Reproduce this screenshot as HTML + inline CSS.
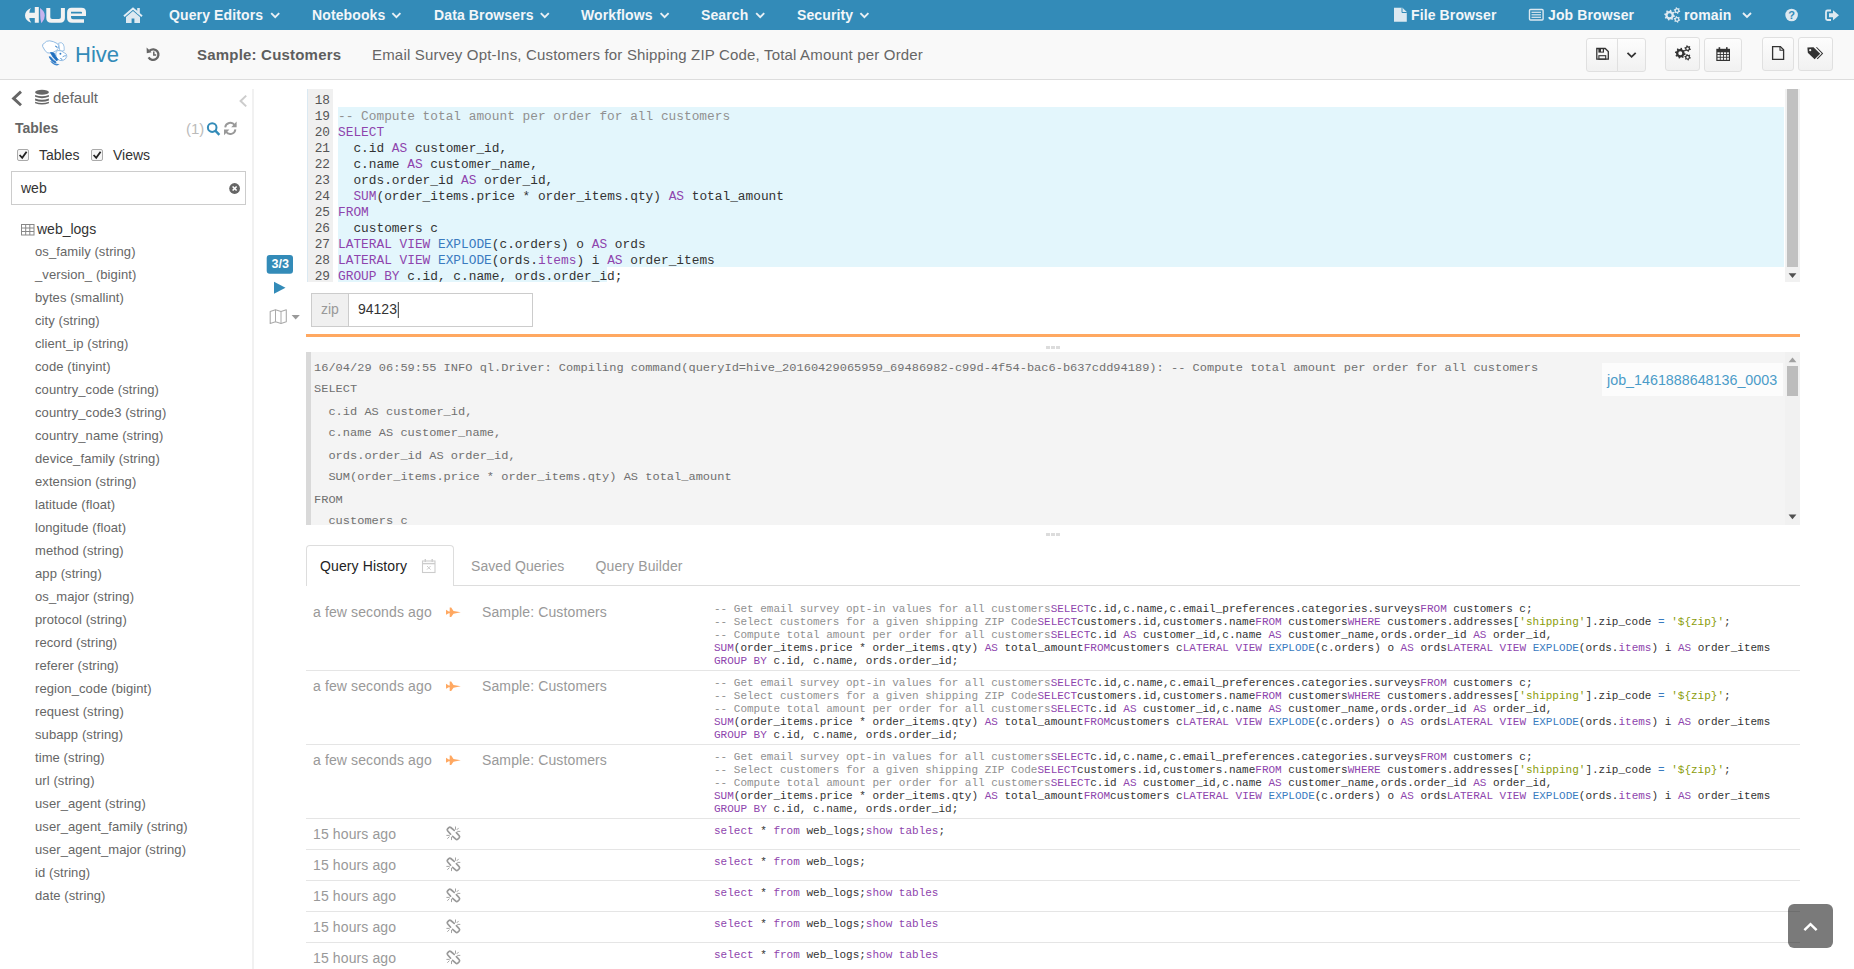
<!DOCTYPE html>
<html><head><meta charset="utf-8">
<style>
html,body{margin:0;padding:0}
body{width:1854px;height:969px;overflow:hidden;position:relative;background:#fff;font-family:"Liberation Sans",sans-serif;color:#333}
.a{position:absolute}
.t{position:absolute;white-space:pre;line-height:1}
svg{position:absolute;overflow:visible}
#nav{left:0;top:0;width:1854px;height:30px;background:#338bb8}
.nl{font-size:14px;font-weight:bold;color:#f2f6f9;top:8px;letter-spacing:0.12px}
#bar{left:0;top:30px;width:1854px;height:49px;background:#f9f9f9;border-bottom:1px solid #dddddd}
.btn{position:absolute;box-sizing:border-box;border:1px solid #e0e0e0;border-radius:3px;background:linear-gradient(#fdfdfd,#f1f1f1)}
.col{font-size:13px;color:#666;left:35px;letter-spacing:0.09px}
.code{font-family:"Liberation Mono",monospace;font-size:12.82px;line-height:16px;white-space:pre;position:absolute;color:#333}
.kw{color:#8e44ad}
.fn{color:#3a7bbf}
.cm{color:#909090}
.st{color:#8a9c0a}
.ln{font-family:"Liberation Mono",monospace;font-size:12.78px;line-height:16px;position:absolute;color:#555;text-align:right;width:22px}
.log{font-family:"Liberation Mono",monospace;font-size:12px;white-space:pre;position:absolute;color:#707070;line-height:22px}
.hc{font-family:"Liberation Mono",monospace;font-size:11.01px;white-space:pre;position:absolute;color:#333;line-height:13px;left:714px}
.ht{font-size:14px;color:#999;letter-spacing:0.12px;position:absolute;white-space:pre;line-height:1}
.hr{position:absolute;left:306px;width:1494px;height:1px;background:#e5e5e5}
</style></head>
<body>
<!-- NAVBAR -->
<div id="nav" class="a">
<svg width="1854" height="30" style="left:0;top:0">
 <!-- logo -->
 <path d="M31,8 Q25,11 25,15.4 Q25,20 31.3,22.8 Q29.3,20.5 29.3,18 L34.8,18 L34.8,22.8 L38.8,22.8 L38.8,7 L34.8,7 L34.8,12.7 L29.3,12.7 Q29.3,10 31,8 Z" fill="#f2f2f2"/>
 <path d="M40,8 Q44.8,11.5 44.8,15.4 Q44.8,19.5 41.8,22.8 L41.2,22.8 Q40.2,19 40.2,15.4 Q40.2,11 40,8 Z" fill="#c8b4ee"/>
 <path d="M46.3,7.9 L50.3,7.9 L50.3,17.2 Q50.3,19 52.2,19 L58.9,19 Q60.9,19 60.9,17.2 L60.9,7.9 L64.9,7.9 L64.9,18 Q64.9,22.8 60,22.8 L51.2,22.8 Q46.3,22.8 46.3,18 Z" fill="#f2f2f2"/>
 <path d="M71.5,7.7 L81.5,7.7 Q86,7.7 86,12 L86,16 L71,16 L71,17.2 Q71,19.2 73,19.2 L84,19.2 L84,22.8 L72,22.8 Q67.1,22.8 67.1,18 L67.1,12.4 Q67.1,7.7 71.5,7.7 Z M71,11.7 L71,13.6 L82,13.6 L82,12.6 Q82,11.7 81,11.7 Z" fill="#f2f2f2" fill-rule="evenodd"/>
 <!-- home -->
 <polyline points="124,16.2 133,8.6 142,16.2" fill="none" stroke="#e2edf4" stroke-width="2"/>
 <path d="M126,17 L133,11 L140,17 L140,23 L134.4,23 L134.4,18.6 L131.6,18.6 L131.6,23 L126,23 Z" fill="#dde9f1"/>
 <rect x="137.2" y="8" width="2.6" height="5.6" fill="#dde9f1"/>
 <!-- chevrons -->
 <g fill="none" stroke="#e8f0f5" stroke-width="1.9">
  <polyline points="271.2,13.2 275.2,17.2 279.2,13.2"/>
  <polyline points="392.4,13.2 396.4,17.2 400.4,13.2"/>
  <polyline points="540.8,13.2 544.8,17.2 548.8,13.2"/>
  <polyline points="660.6,13.2 664.6,17.2 668.6,13.2"/>
  <polyline points="756.2,13.2 760.2,17.2 764.2,13.2"/>
  <polyline points="860.4,13.2 864.4,17.2 868.4,13.2"/>
  <polyline points="1743,13 1747,17 1751,13"/>
 </g>
 <!-- file icon -->
 <path d="M1394,7.7 L1402.5,7.7 L1406.8,12 L1406.8,21.7 L1394,21.7 Z" fill="#dde9f1"/>
 <path d="M1402,7.7 L1402,12.5 L1406.8,12.5" fill="none" stroke="#338bb8" stroke-width="1"/>
 <!-- list-alt -->
 <rect x="1529.5" y="9.5" width="13.6" height="10.5" rx="1" fill="none" stroke="#dde9f1" stroke-width="1.4"/>
 <g stroke="#dde9f1" stroke-width="1.2"><line x1="1531.5" y1="12.3" x2="1541" y2="12.3"/><line x1="1531.5" y1="14.8" x2="1541" y2="14.8"/><line x1="1531.5" y1="17.3" x2="1541" y2="17.3"/></g>
 <!-- cogs -->
 <path fill-rule="evenodd" fill="#dde9f1" d="M1673.90,15.20 L1674.98,15.62 L1674.71,16.95 L1673.55,16.91 L1672.64,18.24 L1673.11,19.31 L1671.98,20.05 L1671.18,19.20 L1669.60,19.50 L1669.18,20.58 L1667.85,20.31 L1667.89,19.15 L1666.56,18.24 L1665.49,18.71 L1664.75,17.58 L1665.60,16.78 L1665.30,15.20 L1664.22,14.78 L1664.49,13.45 L1665.65,13.49 L1666.56,12.16 L1666.09,11.09 L1667.22,10.35 L1668.02,11.20 L1669.60,10.90 L1670.02,9.82 L1671.35,10.09 L1671.31,11.25 L1672.64,12.16 L1673.71,11.69 L1674.45,12.82 L1673.60,13.62 Z M1671.60,15.20 A2.0,2.0 0 1 0 1667.60,15.20 A2.0,2.0 0 1 0 1671.60,15.20 Z"/>
 <path fill-rule="evenodd" fill="#dde9f1" d="M1679.50,10.60 L1680.28,10.94 L1679.99,12.01 L1679.14,11.90 L1678.25,12.77 L1678.34,13.61 L1677.28,13.89 L1676.95,13.10 L1675.75,12.77 L1675.06,13.27 L1674.29,12.48 L1674.81,11.80 L1674.50,10.60 L1673.72,10.26 L1674.01,9.19 L1674.86,9.30 L1675.75,8.43 L1675.66,7.59 L1676.72,7.31 L1677.05,8.10 L1678.25,8.43 L1678.94,7.93 L1679.71,8.72 L1679.19,9.40 Z M1678.20,10.60 A1.2,1.2 0 1 0 1675.80,10.60 A1.2,1.2 0 1 0 1678.20,10.60 Z"/>
 <path fill-rule="evenodd" fill="#dde9f1" d="M1679.50,19.40 L1680.28,19.74 L1679.99,20.81 L1679.14,20.70 L1678.25,21.57 L1678.34,22.41 L1677.28,22.69 L1676.95,21.90 L1675.75,21.57 L1675.06,22.07 L1674.29,21.28 L1674.81,20.60 L1674.50,19.40 L1673.72,19.06 L1674.01,17.99 L1674.86,18.10 L1675.75,17.23 L1675.66,16.39 L1676.72,16.11 L1677.05,16.90 L1678.25,17.23 L1678.94,16.73 L1679.71,17.52 L1679.19,18.20 Z M1678.20,19.40 A1.2,1.2 0 1 0 1675.80,19.40 A1.2,1.2 0 1 0 1678.20,19.40 Z"/>
 <!-- question -->
 <circle cx="1791.6" cy="15" r="6.3" fill="#dde9f1"/>
 <text x="1791.6" y="19.3" font-family="Liberation Sans" font-weight="bold" font-size="11" fill="#338bb8" text-anchor="middle">?</text>
 <!-- sign out -->
 <path d="M1831,10.5 L1827.5,10.5 Q1826,10.5 1826,12 L1826,18.5 Q1826,20 1827.5,20 L1831,20" fill="none" stroke="#dde9f1" stroke-width="1.8"/>
 <path d="M1829,13.2 L1833,13.2 L1833,10.2 L1839,15.2 L1833,20.2 L1833,17.2 L1829,17.2 Z" fill="#dde9f1"/>
</svg>
<span class="t nl" style="left:169px">Query Editors</span>
<span class="t nl" style="left:312px">Notebooks</span>
<span class="t nl" style="left:434px">Data Browsers</span>
<span class="t nl" style="left:581px">Workflows</span>
<span class="t nl" style="left:701px">Search</span>
<span class="t nl" style="left:797px">Security</span>
<span class="t nl" style="left:1411px">File Browser</span>
<span class="t nl" style="left:1548px">Job Browser</span>
<span class="t nl" style="left:1684px">romain</span>
</div>

<!-- SECOND BAR -->
<div id="bar" class="a">
<svg width="1854" height="50" style="left:0;top:0" viewBox="0 30 1854 50">
 <!-- hive logo -->
 <path d="M58.6,43.2 Q61.5,41.6 63.2,44 Q64.6,46.5 64.2,50.5 L60,51.5 Z" fill="#fff" stroke="#8ab8e2" stroke-width="0.8"/>
 <path d="M42.6,46.4 Q42,44 44.4,43.2 Q46,40.6 49.5,40.8 Q53,41 57.4,43.6 Q59.4,45.4 58.4,48.2 Q57,51 53,52.4 Q49.6,53.4 47.2,52.8 Q44.4,50.4 42.6,46.4 Z" fill="#fff" stroke="#7fb0de" stroke-width="0.85"/>
 <path d="M57.5,50.5 Q61.5,50 64.6,53 Q67.2,54 66.8,56.4 Q66,59.6 62.6,60.6 Q59.6,61 57.4,59.2 Q55.4,56.5 55.8,53 Z" fill="#fff" stroke="#7fb0de" stroke-width="0.85"/>
 <path d="M50.4,52.6 Q52.6,52.4 54.2,53.2 Q55.6,56.8 58,59.6 L56.6,61 Q52.6,57.6 50.4,52.6 Z" fill="#1e6fc0" stroke="#1e6fc0" stroke-width="0.7"/>
 <path d="M49,56.8 Q50.4,56.6 51.2,57.4 Q53,60.4 56.2,62 L55.4,63.2 Q51.2,61.4 49,56.8 Z" fill="#2774c4" stroke="#2774c4" stroke-width="0.7"/>
 <path d="M50.2,61 Q51.4,61 52,61.6 Q54,63.8 57.4,64.4 L56.8,65.4 Q52.6,64.8 50.2,61 Z" fill="#3f86cc"/>
 <path d="M56,63.6 L59.6,64.6 L57,65.6 Z" fill="#3f86cc"/>
 <circle cx="60.4" cy="53.8" r="0.95" fill="#2f7bc8"/>
 <path d="M62.6,56.8 Q64.4,55.6 66,55.8" stroke="#5a9ad6" stroke-width="0.9" fill="none"/>
 <path d="M55.2,46 Q56.4,46.4 57.4,47.6" stroke="#3c86cc" stroke-width="1.1" fill="none"/>
 <path d="M60.4,58.4 L62.4,59.6" stroke="#3c86cc" stroke-width="1" fill="none"/>
 <!-- history icon -->
 <path d="M149.6,50.6 A5.3,5.3 0 1 1 148.6,57.4" fill="none" stroke="#666" stroke-width="2.3"/>
 <path d="M146.6,47.6 L151.6,52.2 L146.8,53.2 Z" fill="#666"/>
 <polyline points="153.8,51.6 153.8,54.9 156.2,54.9" fill="none" stroke="#666" stroke-width="1.5"/>
</svg>
<span class="t" style="left:75px;top:13.5px;font-size:22px;color:#338bb8">Hive</span>
<span class="t" style="left:197px;top:17px;font-size:15px;font-weight:bold;color:#5e5e5e;letter-spacing:0.2px">Sample: Customers</span>
<span class="t" style="left:372px;top:17px;font-size:15px;color:#666;letter-spacing:0.18px">Email Survey Opt-Ins, Customers for Shipping ZIP Code, Total Amount per Order</span>
<div class="btn" style="left:1586px;top:8px;width:32px;height:34px;border-radius:3px 0 0 3px"></div>
<div class="btn" style="left:1617px;top:8px;width:29px;height:34px;border-radius:0 3px 3px 0"></div>
<div class="btn" style="left:1665px;top:7px;width:35px;height:34px"></div>
<div class="btn" style="left:1704px;top:8px;width:38px;height:34px"></div>
<div class="btn" style="left:1762px;top:7px;width:32px;height:34px"></div>
<div class="btn" style="left:1798px;top:7px;width:35px;height:34px"></div>
<svg width="1854" height="50" style="left:0;top:0" viewBox="0 30 1854 50">
 <!-- save -->
 <path d="M1596.8,48.5 L1605.2,48.5 L1608.3,51.6 L1608.3,59.2 L1596.8,59.2 Z" fill="none" stroke="#333" stroke-width="1.3"/>
 <rect x="1598.4" y="48.2" width="5.6" height="4.4" fill="#333"/>
 <rect x="1601" y="49.2" width="1.8" height="2.4" fill="#f8f8f8"/>
 <rect x="1598.9" y="55.7" width="6.8" height="3.5" fill="none" stroke="#333" stroke-width="1.1"/>
 <polyline points="1627.5,52.8 1631.6,56.8 1635.7,52.8" fill="none" stroke="#333" stroke-width="1.8"/>
 <!-- gears -->
 <path fill-rule="evenodd" fill="#333" d="M1684.60,53.20 L1685.68,53.62 L1685.41,54.95 L1684.25,54.91 L1683.34,56.24 L1683.81,57.31 L1682.68,58.05 L1681.88,57.20 L1680.30,57.50 L1679.88,58.58 L1678.55,58.31 L1678.59,57.15 L1677.26,56.24 L1676.19,56.71 L1675.45,55.58 L1676.30,54.78 L1676.00,53.20 L1674.92,52.78 L1675.19,51.45 L1676.35,51.49 L1677.26,50.16 L1676.79,49.09 L1677.92,48.35 L1678.72,49.20 L1680.30,48.90 L1680.72,47.82 L1682.05,48.09 L1682.01,49.25 L1683.34,50.16 L1684.41,49.69 L1685.15,50.82 L1684.30,51.62 Z M1682.30,53.20 A2.0,2.0 0 1 0 1678.30,53.20 A2.0,2.0 0 1 0 1682.30,53.20 Z"/>
 <path fill-rule="evenodd" fill="#333" d="M1690.10,48.60 L1690.88,48.94 L1690.59,50.01 L1689.74,49.90 L1688.85,50.77 L1688.94,51.61 L1687.88,51.89 L1687.55,51.10 L1686.35,50.77 L1685.66,51.27 L1684.89,50.48 L1685.41,49.80 L1685.10,48.60 L1684.32,48.26 L1684.61,47.19 L1685.46,47.30 L1686.35,46.43 L1686.26,45.59 L1687.32,45.31 L1687.65,46.10 L1688.85,46.43 L1689.54,45.93 L1690.31,46.72 L1689.79,47.40 Z M1688.80,48.60 A1.2,1.2 0 1 0 1686.40,48.60 A1.2,1.2 0 1 0 1688.80,48.60 Z"/>
 <path fill-rule="evenodd" fill="#333" d="M1690.10,57.20 L1690.88,57.54 L1690.59,58.61 L1689.74,58.50 L1688.85,59.37 L1688.94,60.21 L1687.88,60.49 L1687.55,59.70 L1686.35,59.37 L1685.66,59.87 L1684.89,59.08 L1685.41,58.40 L1685.10,57.20 L1684.32,56.86 L1684.61,55.79 L1685.46,55.90 L1686.35,55.03 L1686.26,54.19 L1687.32,53.91 L1687.65,54.70 L1688.85,55.03 L1689.54,54.53 L1690.31,55.32 L1689.79,56.00 Z M1688.80,57.20 A1.2,1.2 0 1 0 1686.40,57.20 A1.2,1.2 0 1 0 1688.80,57.20 Z"/>
 <!-- calendar -->
 <rect x="1716.3" y="48.8" width="13.7" height="12.2" fill="#333"/>
 <g fill="#f6f6f6">
  <rect x="1717.5" y="52.3" width="2.3" height="1.8"/><rect x="1720.7" y="52.3" width="2.3" height="1.8"/><rect x="1723.9" y="52.3" width="2.3" height="1.8"/><rect x="1727.1" y="52.3" width="1.8" height="1.8"/>
  <rect x="1717.5" y="55" width="2.3" height="1.8"/><rect x="1720.7" y="55" width="2.3" height="1.8"/><rect x="1723.9" y="55" width="2.3" height="1.8"/><rect x="1727.1" y="55" width="1.8" height="1.8"/>
  <rect x="1717.5" y="57.7" width="2.3" height="2.1"/><rect x="1720.7" y="57.7" width="2.3" height="2.1"/><rect x="1723.9" y="57.7" width="2.3" height="2.1"/><rect x="1727.1" y="57.7" width="1.8" height="2.1"/>
 </g>
 <rect x="1718.6" y="47.2" width="1.6" height="3.4" fill="#333"/>
 <rect x="1726" y="47.2" width="1.6" height="3.4" fill="#333"/>
 <!-- file-o -->
 <path d="M1772.6,46.6 L1780.4,46.6 L1783.6,49.8 L1783.6,59.3 L1772.6,59.3 Z" fill="none" stroke="#333" stroke-width="1.3"/>
 <path d="M1780,46.6 L1780,50.3 L1783.6,50.3" fill="none" stroke="#333" stroke-width="1.1"/>
 <!-- tags -->
 <path d="M1807.4,47.5 L1813.5,47.2 L1820.2,53.8 L1814.6,59.2 L1807.8,52.8 Z" fill="#333"/>
 <path d="M1815.8,47.2 L1817,47.2 L1823.2,53.6 L1817.6,59.2 L1816.8,58.6 L1821.8,53.6 Z" fill="#333"/>
 <circle cx="1810.2" cy="50.2" r="1.1" fill="#f6f6f6"/>
</svg>
</div>

<!-- SIDEBAR -->
<svg width="260" height="250" style="left:0;top:0">
 <polyline points="21,91.6 13.6,98.4 21,105.2" fill="none" stroke="#666" stroke-width="2.9"/>
 <!-- database -->
 <g fill="#666">
  <ellipse cx="42" cy="92.2" rx="6.9" ry="2.5"/>
  <path d="M35.1,95 Q42,97.6 48.9,95 L48.9,96.8 Q42,99.6 35.1,96.8 Z"/>
  <path d="M35.1,98.4 Q42,101 48.9,98.4 L48.9,100.4 Q42,103.2 35.1,100.4 Z"/>
  <path d="M35.1,101.8 Q42,104.4 48.9,101.8 L48.9,103.2 Q42,105.8 35.1,103.2 Z"/>
 </g>
 <polyline points="246.2,95.6 240.6,101 246.2,106.4" fill="none" stroke="#ccc" stroke-width="2"/>
 <!-- search -->
 <circle cx="212.2" cy="127.6" r="4.3" fill="none" stroke="#338bb8" stroke-width="2"/>
 <line x1="215.3" y1="130.7" x2="219.4" y2="134.8" stroke="#338bb8" stroke-width="2.4"/>
 <!-- refresh -->
 <path d="M225.2,127.4 A5.2,5.2 0 0 1 234.6,125" fill="none" stroke="#999" stroke-width="1.9"/>
 <path d="M235.4,129.4 A5.2,5.2 0 0 1 226,131.8" fill="none" stroke="#999" stroke-width="1.9"/>
 <path d="M236.6,121.6 L236.6,127.2 L231.2,127.2 Z" fill="#999"/>
 <path d="M224,135.2 L224,129.6 L229.4,129.6 Z" fill="#999"/>
 <!-- checkboxes -->
 <rect x="17.5" y="149.5" width="11" height="11" rx="1.5" fill="#f5f5f5" stroke="#aaa" stroke-width="1"/>
 <polyline points="19.6,155 22.2,157.8 26.6,151.8" fill="none" stroke="#222" stroke-width="1.8"/>
 <rect x="91.5" y="149.5" width="11" height="11" rx="1.5" fill="#f5f5f5" stroke="#aaa" stroke-width="1"/>
 <polyline points="93.6,155 96.2,157.8 100.6,151.8" fill="none" stroke="#222" stroke-width="1.8"/>
 <!-- input -->
 <rect x="11.5" y="171.5" width="234" height="33" fill="#fff" stroke="#ccc" stroke-width="1"/>
 <circle cx="234.6" cy="188.5" r="5.4" fill="#666"/>
 <g stroke="#fff" stroke-width="1.6"><line x1="232.6" y1="186.5" x2="236.6" y2="190.5"/><line x1="236.6" y1="186.5" x2="232.6" y2="190.5"/></g>
 <!-- table icon -->
 <rect x="21.5" y="224.5" width="12.5" height="10.5" fill="none" stroke="#888" stroke-width="1"/>
 <g stroke="#888" stroke-width="1"><line x1="21.5" y1="228" x2="34" y2="228"/><line x1="21.5" y1="231.5" x2="34" y2="231.5"/><line x1="25.7" y1="224.5" x2="25.7" y2="235"/><line x1="29.8" y1="224.5" x2="29.8" y2="235"/></g>
</svg>
<span class="t" style="left:53px;top:90px;font-size:15px;color:#666">default</span>
<span class="t" style="left:15px;top:121px;font-size:14px;font-weight:bold;color:#666">Tables</span>
<span class="t" style="left:186px;top:121px;font-size:15px;color:#bbb">(1)</span>
<span class="t" style="left:39px;top:148px;font-size:14px;color:#333">Tables</span>
<span class="t" style="left:113px;top:148px;font-size:14px;color:#333">Views</span>
<span class="t" style="left:21px;top:181px;font-size:14px;color:#333">web</span>
<span class="t" style="left:37px;top:221.5px;font-size:14px;color:#333">web_logs</span>
<span class="t col" style="top:244.8px">os_family (string)</span>
<span class="t col" style="top:267.8px">_version_ (bigint)</span>
<span class="t col" style="top:290.8px">bytes (smallint)</span>
<span class="t col" style="top:313.8px">city (string)</span>
<span class="t col" style="top:336.8px">client_ip (string)</span>
<span class="t col" style="top:359.8px">code (tinyint)</span>
<span class="t col" style="top:382.8px">country_code (string)</span>
<span class="t col" style="top:405.8px">country_code3 (string)</span>
<span class="t col" style="top:428.8px">country_name (string)</span>
<span class="t col" style="top:451.8px">device_family (string)</span>
<span class="t col" style="top:474.8px">extension (string)</span>
<span class="t col" style="top:497.8px">latitude (float)</span>
<span class="t col" style="top:520.8px">longitude (float)</span>
<span class="t col" style="top:543.8px">method (string)</span>
<span class="t col" style="top:566.8px">app (string)</span>
<span class="t col" style="top:589.8px">os_major (string)</span>
<span class="t col" style="top:612.8px">protocol (string)</span>
<span class="t col" style="top:635.8px">record (string)</span>
<span class="t col" style="top:658.8px">referer (string)</span>
<span class="t col" style="top:681.8px">region_code (bigint)</span>
<span class="t col" style="top:704.8px">request (string)</span>
<span class="t col" style="top:727.8px">subapp (string)</span>
<span class="t col" style="top:750.8px">time (string)</span>
<span class="t col" style="top:773.8px">url (string)</span>
<span class="t col" style="top:796.8px">user_agent (string)</span>
<span class="t col" style="top:819.8px">user_agent_family (string)</span>
<span class="t col" style="top:842.8px">user_agent_major (string)</span>
<span class="t col" style="top:865.8px">id (string)</span>
<span class="t col" style="top:888.8px">date (string)</span>
<div class="a" style="left:252px;top:89px;width:2px;height:880px;background:#f1f1f1"></div>

<!-- EDITOR -->
<div class="a" style="left:307px;top:89px;width:1px;height:193px;background:#dbe9f2"></div>
<div class="a" style="left:308px;top:89px;width:25px;height:193px;background:#f0f0f0"></div>
<div class="a" style="left:338px;top:107px;width:1446px;height:160px;background:#e3f6fc"></div>
<div class="a" style="left:338px;top:267px;width:269px;height:15px;background:#e3f6fc"></div>
<div class="ln" style="left:308px;top:93px">18
19
20
21
22
23
24
25
26
27
28
29</div>
<div class="code" style="left:338px;top:93px">
<span class="cm">-- Compute total amount per order for all customers</span>
<span class="kw">SELECT</span>
  c.id <span class="kw">AS</span> customer_id,
  c.name <span class="kw">AS</span> customer_name,
  ords.order_id <span class="kw">AS</span> order_id,
  <span class="kw">SUM</span>(order_items.price * order_items.qty) <span class="kw">AS</span> total_amount
<span class="kw">FROM</span>
  customers c
<span class="kw">LATERAL VIEW</span> <span class="fn">EXPLODE</span>(c.orders) o <span class="kw">AS</span> ords
<span class="kw">LATERAL VIEW</span> <span class="fn">EXPLODE</span>(ords.<span class="kw">items</span>) i <span class="kw">AS</span> order_items
<span class="kw">GROUP BY</span> c.id, c.name, ords.order_id;</div>
<div class="a" style="left:1785px;top:89px;width:15px;height:193px;background:#f1f1f1"></div>
<div class="a" style="left:1787px;top:89px;width:11px;height:178px;background:#c1c1c1"></div>
<svg width="1854" height="969" style="left:0;top:0">
 <path d="M1788.6,273.3 L1796.4,273.3 L1792.5,277.9 Z" fill="#505050"/>
 <!-- badge -->
 <rect x="266.7" y="255" width="26.3" height="18.8" rx="3" fill="#338bb8"/>
 <!-- play -->
 <path d="M274,281.8 L285.5,287.8 L274,293.8 Z" fill="#338bb8"/>
 <!-- map -->
 <path d="M270.2,311.5 L275.5,309.8 L281,311.5 L286.3,309.8 L286.3,321.8 L281,323.5 L275.5,321.8 L270.2,323.5 Z" fill="none" stroke="#aaa" stroke-width="1.1" stroke-linejoin="round"/>
 <line x1="275.5" y1="309.8" x2="275.5" y2="321.8" stroke="#aaa" stroke-width="1"/>
 <line x1="281" y1="311.5" x2="281" y2="323.5" stroke="#aaa" stroke-width="1"/>
 <path d="M291.6,315 L299.8,315 L295.7,319.6 Z" fill="#999"/>
 <!-- zip -->
 <rect x="311.5" y="293.5" width="221" height="33" fill="#fff" stroke="#ccc"/>
 <rect x="312" y="294" width="36.5" height="32" fill="#f0f0f0"/>
 <line x1="348.5" y1="293.5" x2="348.5" y2="326.5" stroke="#ccc"/>
 <line x1="398.3" y1="302" x2="398.3" y2="318" stroke="#333" stroke-width="1"/>
 <!-- resize dots -->
 <g fill="#dcdcdc">
  <rect x="1046" y="346" width="4" height="3"/><rect x="1051" y="346" width="4" height="3"/><rect x="1056" y="346" width="4" height="3"/>
  <rect x="1046" y="533" width="4" height="3"/><rect x="1051" y="533" width="4" height="3"/><rect x="1056" y="533" width="4" height="3"/>
 </g>
</svg>
<span class="t" style="left:271.5px;top:257.6px;font-size:12.6px;font-weight:bold;color:#fff">3/3</span>
<span class="t" style="left:321px;top:302px;font-size:14px;color:#999">zip</span>
<span class="t" style="left:358px;top:302px;font-size:14px;color:#333">94123</span>
<div class="a" style="left:306px;top:334px;width:1494px;height:3px;background:#ffa861"></div>

<!-- LOGS -->
<div class="a" style="left:306px;top:352px;width:1494px;height:173px;background:#f4f4f4;overflow:hidden">
 <div class="a" style="left:0;top:0;width:5px;height:173px;background:#d9d9d9"></div>
 <div class="log" style="left:8px;top:4.6px;transform:scaleY(0.9);transform-origin:0 0;line-height:24.45px">16/04/29 06:59:55 INFO ql.Driver: Compiling command(queryId=hive_20160429065959_69486982-c99d-4f54-bac6-b637cdd94189): -- Compute total amount per order for all customers
SELECT
  c.id AS customer_id,
  c.name AS customer_name,
  ords.order_id AS order_id,
  SUM(order_items.price * order_items.qty) AS total_amount
FROM
  customers c</div>
 <div class="a" style="left:1296px;top:11px;width:181px;height:33px;background:#fcfcfc"></div>
 <span class="t" style="left:1301px;top:21px;font-size:14.3px;color:#4a9bc8">job_1461888648136_0003</span>
 <div class="a" style="left:1479px;top:0;width:15px;height:173px;background:#f1f1f1"></div>
 <div class="a" style="left:1481px;top:14px;width:11px;height:30px;background:#bcbcbc"></div>
 <svg width="15" height="173" style="left:1479px;top:0">
  <path d="M3.6,10.2 L11.4,10.2 L7.5,5.6 Z" fill="#a0a0a0"/>
  <path d="M3.6,162.6 L11.4,162.6 L7.5,167.2 Z" fill="#505050"/>
 </svg>
</div>

<!-- HISTORY -->
<div class="a" style="left:306px;top:545px;width:148px;height:41px;box-sizing:border-box;border:1px solid #ddd;border-bottom:none;border-radius:4px 4px 0 0;background:#fff"></div>
<div class="a" style="left:453px;top:585px;width:1347px;height:1px;background:#ddd"></div>
<span class="t" style="left:320px;top:559px;font-size:14px;color:#222;letter-spacing:0.12px">Query History</span>
<span class="t" style="left:471px;top:559px;font-size:14px;color:#999;letter-spacing:0.06px">Saved Queries</span>
<span class="t" style="left:595.5px;top:559px;font-size:14px;color:#999;letter-spacing:0.12px">Query Builder</span>
<svg width="1854" height="969" style="left:0;top:0">
 <rect x="422.5" y="561" width="12.5" height="11.5" fill="none" stroke="#ccc" stroke-width="1.1"/>
 <line x1="422.5" y1="563.6" x2="435" y2="563.6" stroke="#ccc" stroke-width="1.4"/>
 <rect x="424.6" y="559" width="1.4" height="3" fill="#ccc"/><rect x="431.5" y="559" width="1.4" height="3" fill="#ccc"/>
 <g stroke="#ccc" stroke-width="1"><line x1="427" y1="566" x2="430.6" y2="569.6"/><line x1="430.6" y1="566" x2="427" y2="569.6"/></g>
 <g transform="translate(0,0)" fill="#ffa861">
  <path d="M446,609.8 L448.8,611.5 L449.7,611.5 L449.7,607.6 L451.2,607.6 L453.5,611 L460.8,612.3 L453.5,613.7 L451.2,617 L449.7,617 L449.7,613.2 L448.8,613.2 L446,614.8 Z"/>
 </g>
 <g transform="translate(0,74)" fill="#ffa861">
  <path d="M446,609.8 L448.8,611.5 L449.7,611.5 L449.7,607.6 L451.2,607.6 L453.5,611 L460.8,612.3 L453.5,613.7 L451.2,617 L449.7,617 L449.7,613.2 L448.8,613.2 L446,614.8 Z"/>
 </g>
 <g transform="translate(0,148)" fill="#ffa861">
  <path d="M446,609.8 L448.8,611.5 L449.7,611.5 L449.7,607.6 L451.2,607.6 L453.5,611 L460.8,612.3 L453.5,613.7 L451.2,617 L449.7,617 L449.7,613.2 L448.8,613.2 L446,614.8 Z"/>
 </g>
 <g transform="translate(0,0)" fill="none" stroke="#999" stroke-width="1.7" stroke-linecap="round">
  <path d="M454.2,830.4 L450.8,827.5 Q449.8,826.8 448.8,827.6 L447.6,828.8 Q446.8,829.8 447.6,830.8 L450.6,834.2"/>
  <path d="M452.6,836.4 L455.8,839.2 Q456.8,840 457.8,839.2 L459.2,837.8 Q460,836.8 459.2,835.8 L456.4,832.6"/>
  <g stroke-width="0.9"><line x1="455.5" y1="826.9" x2="455.5" y2="829.3"/><line x1="458.4" y1="828.2" x2="457" y2="829.6"/><line x1="457.6" y1="831.4" x2="459.9" y2="831.4"/>
  <line x1="446.8" y1="835.4" x2="449.3" y2="835.4"/><line x1="447.6" y1="838.4" x2="449.2" y2="836.9"/><line x1="451.5" y1="837.3" x2="451.5" y2="839.7"/></g>
 </g>
 <g transform="translate(0,31)" fill="none" stroke="#999" stroke-width="1.7" stroke-linecap="round">
  <path d="M454.2,830.4 L450.8,827.5 Q449.8,826.8 448.8,827.6 L447.6,828.8 Q446.8,829.8 447.6,830.8 L450.6,834.2"/>
  <path d="M452.6,836.4 L455.8,839.2 Q456.8,840 457.8,839.2 L459.2,837.8 Q460,836.8 459.2,835.8 L456.4,832.6"/>
  <g stroke-width="0.9"><line x1="455.5" y1="826.9" x2="455.5" y2="829.3"/><line x1="458.4" y1="828.2" x2="457" y2="829.6"/><line x1="457.6" y1="831.4" x2="459.9" y2="831.4"/>
  <line x1="446.8" y1="835.4" x2="449.3" y2="835.4"/><line x1="447.6" y1="838.4" x2="449.2" y2="836.9"/><line x1="451.5" y1="837.3" x2="451.5" y2="839.7"/></g>
 </g>
 <g transform="translate(0,62)" fill="none" stroke="#999" stroke-width="1.7" stroke-linecap="round">
  <path d="M454.2,830.4 L450.8,827.5 Q449.8,826.8 448.8,827.6 L447.6,828.8 Q446.8,829.8 447.6,830.8 L450.6,834.2"/>
  <path d="M452.6,836.4 L455.8,839.2 Q456.8,840 457.8,839.2 L459.2,837.8 Q460,836.8 459.2,835.8 L456.4,832.6"/>
  <g stroke-width="0.9"><line x1="455.5" y1="826.9" x2="455.5" y2="829.3"/><line x1="458.4" y1="828.2" x2="457" y2="829.6"/><line x1="457.6" y1="831.4" x2="459.9" y2="831.4"/>
  <line x1="446.8" y1="835.4" x2="449.3" y2="835.4"/><line x1="447.6" y1="838.4" x2="449.2" y2="836.9"/><line x1="451.5" y1="837.3" x2="451.5" y2="839.7"/></g>
 </g>
 <g transform="translate(0,93)" fill="none" stroke="#999" stroke-width="1.7" stroke-linecap="round">
  <path d="M454.2,830.4 L450.8,827.5 Q449.8,826.8 448.8,827.6 L447.6,828.8 Q446.8,829.8 447.6,830.8 L450.6,834.2"/>
  <path d="M452.6,836.4 L455.8,839.2 Q456.8,840 457.8,839.2 L459.2,837.8 Q460,836.8 459.2,835.8 L456.4,832.6"/>
  <g stroke-width="0.9"><line x1="455.5" y1="826.9" x2="455.5" y2="829.3"/><line x1="458.4" y1="828.2" x2="457" y2="829.6"/><line x1="457.6" y1="831.4" x2="459.9" y2="831.4"/>
  <line x1="446.8" y1="835.4" x2="449.3" y2="835.4"/><line x1="447.6" y1="838.4" x2="449.2" y2="836.9"/><line x1="451.5" y1="837.3" x2="451.5" y2="839.7"/></g>
 </g>
 <g transform="translate(0,124)" fill="none" stroke="#999" stroke-width="1.7" stroke-linecap="round">
  <path d="M454.2,830.4 L450.8,827.5 Q449.8,826.8 448.8,827.6 L447.6,828.8 Q446.8,829.8 447.6,830.8 L450.6,834.2"/>
  <path d="M452.6,836.4 L455.8,839.2 Q456.8,840 457.8,839.2 L459.2,837.8 Q460,836.8 459.2,835.8 L456.4,832.6"/>
  <g stroke-width="0.9"><line x1="455.5" y1="826.9" x2="455.5" y2="829.3"/><line x1="458.4" y1="828.2" x2="457" y2="829.6"/><line x1="457.6" y1="831.4" x2="459.9" y2="831.4"/>
  <line x1="446.8" y1="835.4" x2="449.3" y2="835.4"/><line x1="447.6" y1="838.4" x2="449.2" y2="836.9"/><line x1="451.5" y1="837.3" x2="451.5" y2="839.7"/></g>
 </g>
</svg>
<span class="t ht" style="left:313px;top:604.5px">a few seconds ago</span>
<span class="t ht" style="left:482px;top:604.5px">Sample: Customers</span>
<div class="hc" style="top:602.5px"><span class="cm">-- Get email survey opt-in values for all customers</span><span class="kw">SELECT</span>c.id,c.name,c.email_preferences.categories.surveys<span class="kw">FROM</span> customers c;
<span class="cm">-- Select customers for a given shipping ZIP Code</span><span class="kw">SELECT</span>customers.id,customers.name<span class="kw">FROM</span> customers<span class="kw">WHERE</span> customers.addresses[<span class="st">'shipping'</span>].zip_code <span class="fn">=</span> <span class="st">'${zip}'</span>;
<span class="cm">-- Compute total amount per order for all customers</span><span class="kw">SELECT</span>c.id <span class="kw">AS</span> customer_id,c.name <span class="kw">AS</span> customer_name,ords.order_id <span class="kw">AS</span> order_id,
<span class="kw">SUM</span>(order_items.price * order_items.qty) <span class="kw">AS</span> total_amount<span class="kw">FROM</span>customers c<span class="kw">LATERAL VIEW</span> <span class="fn">EXPLODE</span>(c.orders) o <span class="kw">AS</span> ords<span class="kw">LATERAL VIEW</span> <span class="fn">EXPLODE</span>(ords.<span class="kw">items</span>) i <span class="kw">AS</span> order_items
<span class="kw">GROUP BY</span> c.id, c.name, ords.order_id;</div>
<div class="hr" style="top:670px"></div>
<span class="t ht" style="left:313px;top:678.5px">a few seconds ago</span>
<span class="t ht" style="left:482px;top:678.5px">Sample: Customers</span>
<div class="hc" style="top:676.5px"><span class="cm">-- Get email survey opt-in values for all customers</span><span class="kw">SELECT</span>c.id,c.name,c.email_preferences.categories.surveys<span class="kw">FROM</span> customers c;
<span class="cm">-- Select customers for a given shipping ZIP Code</span><span class="kw">SELECT</span>customers.id,customers.name<span class="kw">FROM</span> customers<span class="kw">WHERE</span> customers.addresses[<span class="st">'shipping'</span>].zip_code <span class="fn">=</span> <span class="st">'${zip}'</span>;
<span class="cm">-- Compute total amount per order for all customers</span><span class="kw">SELECT</span>c.id <span class="kw">AS</span> customer_id,c.name <span class="kw">AS</span> customer_name,ords.order_id <span class="kw">AS</span> order_id,
<span class="kw">SUM</span>(order_items.price * order_items.qty) <span class="kw">AS</span> total_amount<span class="kw">FROM</span>customers c<span class="kw">LATERAL VIEW</span> <span class="fn">EXPLODE</span>(c.orders) o <span class="kw">AS</span> ords<span class="kw">LATERAL VIEW</span> <span class="fn">EXPLODE</span>(ords.<span class="kw">items</span>) i <span class="kw">AS</span> order_items
<span class="kw">GROUP BY</span> c.id, c.name, ords.order_id;</div>
<div class="hr" style="top:744px"></div>
<span class="t ht" style="left:313px;top:752.5px">a few seconds ago</span>
<span class="t ht" style="left:482px;top:752.5px">Sample: Customers</span>
<div class="hc" style="top:750.5px"><span class="cm">-- Get email survey opt-in values for all customers</span><span class="kw">SELECT</span>c.id,c.name,c.email_preferences.categories.surveys<span class="kw">FROM</span> customers c;
<span class="cm">-- Select customers for a given shipping ZIP Code</span><span class="kw">SELECT</span>customers.id,customers.name<span class="kw">FROM</span> customers<span class="kw">WHERE</span> customers.addresses[<span class="st">'shipping'</span>].zip_code <span class="fn">=</span> <span class="st">'${zip}'</span>;
<span class="cm">-- Compute total amount per order for all customers</span><span class="kw">SELECT</span>c.id <span class="kw">AS</span> customer_id,c.name <span class="kw">AS</span> customer_name,ords.order_id <span class="kw">AS</span> order_id,
<span class="kw">SUM</span>(order_items.price * order_items.qty) <span class="kw">AS</span> total_amount<span class="kw">FROM</span>customers c<span class="kw">LATERAL VIEW</span> <span class="fn">EXPLODE</span>(c.orders) o <span class="kw">AS</span> ords<span class="kw">LATERAL VIEW</span> <span class="fn">EXPLODE</span>(ords.<span class="kw">items</span>) i <span class="kw">AS</span> order_items
<span class="kw">GROUP BY</span> c.id, c.name, ords.order_id;</div>
<div class="hr" style="top:818px"></div>
<span class="t ht" style="left:313px;top:826.5px">15 hours ago</span>
<div class="hc" style="top:824.5px"><span class="kw">select</span> * <span class="kw">from</span> web_logs;<span class="kw">show</span> <span class="kw">tables</span>;</div>
<span class="t ht" style="left:313px;top:857.5px">15 hours ago</span>
<div class="hc" style="top:855.5px"><span class="kw">select</span> * <span class="kw">from</span> web_logs;</div>
<div class="hr" style="top:849px"></div>
<span class="t ht" style="left:313px;top:888.5px">15 hours ago</span>
<div class="hc" style="top:886.5px"><span class="kw">select</span> * <span class="kw">from</span> web_logs;<span class="kw">show</span> <span class="kw">tables</span></div>
<div class="hr" style="top:880px"></div>
<span class="t ht" style="left:313px;top:919.5px">15 hours ago</span>
<div class="hc" style="top:917.5px"><span class="kw">select</span> * <span class="kw">from</span> web_logs;<span class="kw">show</span> <span class="kw">tables</span></div>
<div class="hr" style="top:911px"></div>
<span class="t ht" style="left:313px;top:950.5px">15 hours ago</span>
<div class="hc" style="top:948.5px"><span class="kw">select</span> * <span class="kw">from</span> web_logs;<span class="kw">show</span> <span class="kw">tables</span></div>
<div class="hr" style="top:942px"></div>
<div class="a" style="left:1788px;top:904px;width:45px;height:44px;border-radius:6px;background:rgba(0,0,0,0.52)"></div>
<svg width="1854" height="969" style="left:0;top:0"><polyline points="1804.4,930.2 1810.5,924.2 1816.6,930.2" fill="none" stroke="#fff" stroke-width="2.5"/></svg>

</body></html>
